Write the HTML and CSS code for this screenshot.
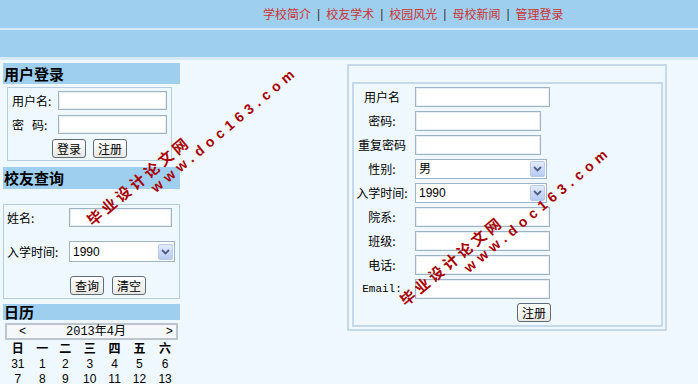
FILE: index.html
```html
<!DOCTYPE html>
<html lang="zh-CN">
<head>
    <meta charset="UTF-8">
    <title>校友录</title>
    <link rel="stylesheet" href="styles.css">
</head>
<body>
    <!-- 顶部导航 -->
    <div class="topbar">
        <nav class="nav">
            <a href="#">学校简介</a><span class="sep">|</span>
            <a href="#">校友学术</a><span class="sep">|</span>
            <a href="#">校园风光</a><span class="sep">|</span>
            <a href="#">母校新闻</a><span class="sep">|</span>
            <a href="#">管理登录</a>
        </nav>
    </div>
    <div class="subbar"></div>

    <div class="main">
        <!-- 左侧栏 -->
        <div class="side">
            <h2 class="side-title">用户登录</h2>
            <div class="login-box">
                <div class="field">
                    <label>用户名:</label>
                    <input type="text" class="txt login-txt">
                </div>
                <div class="field second">
                    <label>密&nbsp;&nbsp;&nbsp;码:</label>
                    <input type="password" class="txt login-txt">
                </div>
                <div class="login-btns">
                    <button class="btn">登录</button>
                    <button class="btn">注册</button>
                </div>
            </div>

            <h2 class="side-title t2">校友查询</h2>
            <div class="search-box">
                <div class="field">
                    <label>姓名:</label>
                    <input type="text" class="txt name-txt">
                </div>
                <div class="field gap">
                    <label>入学时间:</label>
                    <div class="select year-select">
                        <select><option>1990</option></select>
                        <span class="arrow"><svg width="9" height="6" viewBox="0 0 9 6"><path d="M1 1 L4.5 4.5 L8 1" fill="none" stroke="#4b5f86" stroke-width="1.8"/></svg></span>
                    </div>
                </div>
                <div class="search-btns">
                    <button class="btn">查询</button>
                    <button class="btn">清空</button>
                </div>
            </div>

            <h2 class="side-title t3">日历</h2>
            <div class="calendar">
                <div class="cal-head">
                    <span>&lt;</span>
                    <span>2013年4月</span>
                    <span>&gt;</span>
                </div>
                <table class="cal-table">
                    <tr class="week"><td>日</td><td>一</td><td>二</td><td>三</td><td>四</td><td>五</td><td>六</td></tr>
                    <tr><td>31</td><td>1</td><td>2</td><td>3</td><td>4</td><td>5</td><td>6</td></tr>
                    <tr><td>7</td><td>8</td><td>9</td><td>10</td><td>11</td><td>12</td><td>13</td></tr>
                </table>
            </div>
        </div>

        <!-- 注册表单 -->
        <div class="content">
            <div class="reg-outer">
                <div class="reg-inner">
                    <label>用户名</label>
                    <input type="text" class="txt w135">
                    <label>密码:</label>
                    <input type="password" class="txt w126">
                    <label>重复密码</label>
                    <input type="password" class="txt w126">
                    <label>性别:</label>
                    <div class="select w132">
                        <select><option>男</option><option>女</option></select>
                        <span class="arrow"><svg width="9" height="6" viewBox="0 0 9 6"><path d="M1 1 L4.5 4.5 L8 1" fill="none" stroke="#4b5f86" stroke-width="1.8"/></svg></span>
                    </div>
                    <label>入学时间:</label>
                    <div class="select w132">
                        <select><option>1990</option></select>
                        <span class="arrow"><svg width="9" height="6" viewBox="0 0 9 6"><path d="M1 1 L4.5 4.5 L8 1" fill="none" stroke="#4b5f86" stroke-width="1.8"/></svg></span>
                    </div>
                    <label>院系:</label>
                    <input type="text" class="txt w135">
                    <label>班级:</label>
                    <input type="text" class="txt w135">
                    <label>电话:</label>
                    <input type="text" class="txt w135">
                    <label class="mono">Email:</label>
                    <input type="text" class="txt w135">
                    <span></span>
                    <button class="btn reg-btn">注册</button>
                </div>
            </div>
        </div>
    </div>

    <!-- 水印 -->
    <div class="watermark wm1">
        <div class="wm-cn">毕业设计论文网</div>
        <div class="wm-en">www.doc163.com</div>
    </div>
    <div class="watermark wm2">
        <div class="wm-cn">毕业设计论文网</div>
        <div class="wm-en">www.doc163.com</div>
    </div>
</body>
</html>
```

FILE: styles.css
```css
body {
    margin: 0;
    background-color: #eff8fe;
    font-family: "Noto Sans CJK SC", sans-serif;
    font-size: 12px;
    line-height: 1;
    color: #000;
}

.topbar {
    height: 28px;
    background-color: #9fcfef;
    border-bottom: 2px solid #d6eaf8;
    display: flex;
    align-items: center;
    padding-left: 263px;
}

.nav {
    display: flex;
    align-items: center;
}

    .nav a {
        color: #cc3333;
        text-decoration: none;
    }

    .nav .sep {
        margin: 0 6px;
        color: #333;
        font-family: "Liberation Sans", sans-serif;
    }

.subbar {
    height: 27px;
    background-color: #9fcfef;
    border-bottom: 3px solid #d6eaf8;
}

.main {
    display: flex;
    align-items: flex-start;
}

.side {
    width: 177px;
    margin-left: 3px;
}

.side-title {
    margin: 3px 0 0;
    height: 21px;
    line-height: 21px;
    padding-left: 1px;
    background-color: #9fcfef;
    font-size: 15px;
    font-weight: bold;
}

    .side-title.t2 {
        margin-top: 6px;
        height: 22px;
        line-height: 22px;
    }

    .side-title.t3 {
        margin-top: 5px;
        height: 16px;
        line-height: 16px;
    }

.field {
    display: flex;
    align-items: center;
}

    .field label {
        flex: none;
    }

.txt {
    box-sizing: border-box;
    height: 20px;
    border: 1px solid #9fb3c6;
    box-shadow: inset 0 0 0 1px #e8eef4;
    background: #fff;
    padding: 0 3px;
    margin: 0;
}

.btn {
    box-sizing: border-box;
    height: 19px;
    padding: 0 4px;
    border: 1px solid #5d6c7c;
    border-radius: 3px;
    background: linear-gradient(#ffffff, #e9e8e2);
    font-family: "Noto Sans CJK SC", sans-serif;
    font-size: 12px;
    line-height: 16px;
    color: #000;
    white-space: nowrap;
}

.select {
    box-sizing: border-box;
    height: 20px;
    display: flex;
    align-items: center;
    border: 1px solid #9fb3c6;
    background: #fff;
}

    .select select {
        flex: 1;
        min-width: 0;
        height: 100%;
        border: none;
        background: transparent;
        appearance: none;
        -webkit-appearance: none;
        padding: 0 3px;
        font-family: "Liberation Sans", "Noto Sans CJK SC", sans-serif;
        font-size: 12px;
        color: #000;
        outline: none;
    }

    .select .arrow {
        width: 15px;
        height: 16px;
        margin-right: 1px;
        display: flex;
        align-items: center;
        justify-content: center;
        border: 1px solid #b9cbea;
        border-radius: 2px;
        box-sizing: border-box;
        background: linear-gradient(#e2ebfc, #b7caf1);
    }

/* 用户登录 */
.login-box {
    margin: 3px 8px 0 4px;
    border: 1px solid #b4cde2;
    padding: 3px 4px 2px 4px;
}

    .login-box .field label {
        width: 46px;
    }

    .login-box .field.second {
        margin-top: 5px;
    }

.login-txt {
    width: 109px;
    height: 19px;
}

.login-btns {
    display: flex;
    justify-content: center;
    gap: 7px;
    margin-top: 5px;
}

/* 校友查询 */
.search-box {
    margin-top: 15px;
    border: 1px solid #b4cde2;
    padding: 3px 4px 3px 3px;
}

    .search-box .field label {
        width: 62px;
    }

    .search-box .field.gap {
        margin-top: 14px;
    }

.name-txt {
    width: 103px;
    height: 19px;
}

.year-select {
    width: 107px;
    height: 21px;
}

.search-btns {
    display: flex;
    gap: 8px;
    margin-top: 14px;
    padding-left: 63px;
}

/* 日历 */
.calendar {
    margin: 3px 0 0 2px;
    width: 173px;
}

.cal-head {
    display: flex;
    justify-content: space-between;
    align-items: center;
    height: 13px;
    border: 2px solid #bcc5ce;
    background-color: #f4f8fb;
    padding: 0 3px 0 12px;
    font-family: "Liberation Mono", "Noto Sans CJK SC", monospace;
    font-size: 12px;
}

.cal-table {
    width: 100%;
    border-collapse: collapse;
    font-family: "Liberation Sans", "Noto Sans CJK SC", sans-serif;
    font-size: 12px;
}

    .cal-table td {
        height: 15px;
        padding: 0;
        text-align: center;
    }

    .cal-table .week td {
        font-weight: bold;
        font-family: "Noto Sans CJK SC", sans-serif;
        height: 16px;
    }

/* 注册 */
.content {
    margin: 4px 0 0 167px;
}

.reg-outer {
    width: 311px;
    border: 2px solid #c5d9eb;
    padding: 16px 2px 2px 3px;
}

.reg-inner {
    border: 2px solid #c5d9eb;
    padding: 3px 0 3px 0;
    display: grid;
    grid-template-columns: 56px 136px;
    column-gap: 5px;
    row-gap: 4px;
}

    .reg-inner label {
        line-height: 20px;
        text-align: center;
    }

    .reg-inner .mono {
        font-family: "Liberation Mono", monospace;
        font-size: 11px;
    }

.w135 { width: 135px; }
.w126 { width: 126px; }
.w132 { width: 132px; }

.reg-btn {
    justify-self: end;
}

/* 水印 */
.watermark {
    position: absolute;
    transform: rotate(-40deg);
    transform-origin: 8px 9px;
    color: #a80000;
    font-weight: bold;
    white-space: nowrap;
    pointer-events: none;
}

.wm1 { left: 87px; top: 208px; }
.wm2 { left: 400px; top: 288px; }

.wm-cn {
    font-family: "Noto Sans CJK SC", sans-serif;
    font-size: 15px;
    line-height: 17px;
    letter-spacing: 3.5px;
}

.wm-en {
    font-family: "Liberation Sans", sans-serif;
    font-size: 14px;
    line-height: 17px;
    letter-spacing: 5px;
    padding-left: 70px;
}
```
